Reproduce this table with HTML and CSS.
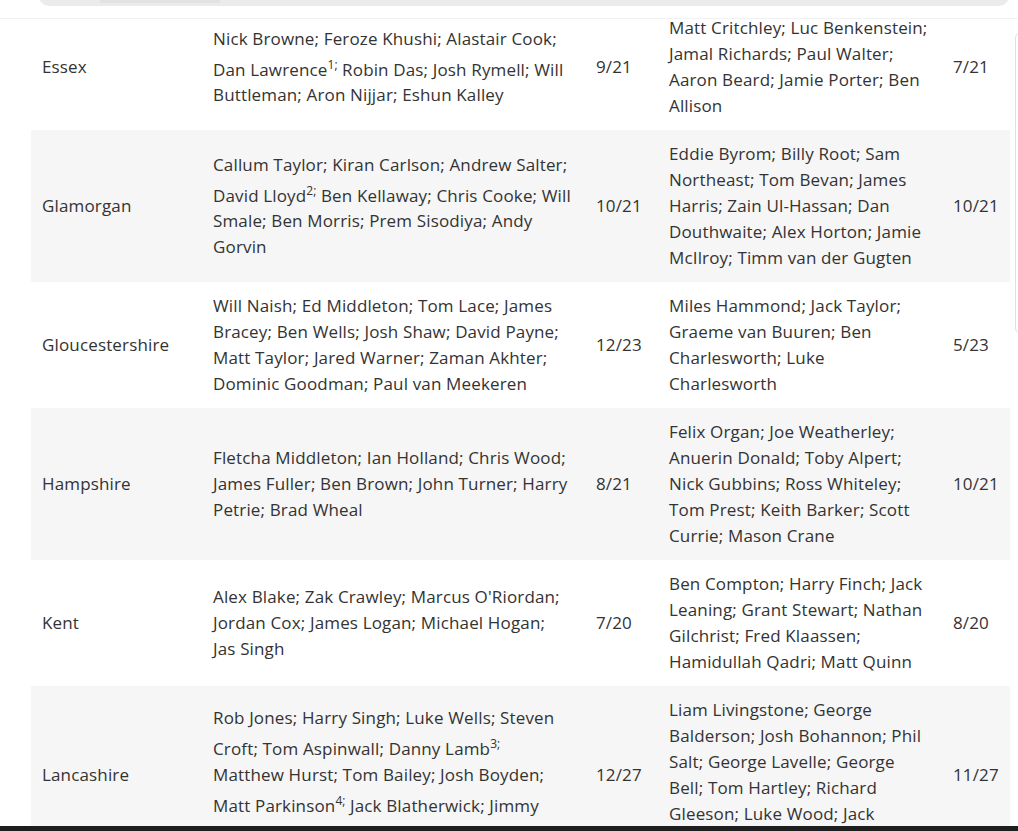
FILE: index.html
```html
<!DOCTYPE html>
<html lang="en">
<head>
<meta charset="utf-8">
<title>County squads</title>
<link rel="stylesheet" href="styles.css">
</head>
<body>
<div class="topbar"><div class="thumb"></div></div>
<div class="topline"></div>
<div class="sidepanel"></div>
<table class="squads">
  <colgroup>
    <col class="c-county"><col class="c-names"><col class="c-num"><col class="c-names2"><col class="c-num2">
  </colgroup>
  <tbody>
    <tr>
      <td>Essex</td>
      <td>Nick Browne; Feroze Khushi; Alastair Cook;<br>Dan Lawrence<sup>1;</sup> Robin Das; Josh Rymell; Will<br>Buttleman; Aron Nijjar; Eshun Kalley</td>
      <td>9/21</td>
      <td>Matt Critchley; Luc Benkenstein;<br>Jamal Richards; Paul Walter;<br>Aaron Beard; Jamie Porter; Ben<br>Allison</td>
      <td>7/21</td>
    </tr>
    <tr>
      <td>Glamorgan</td>
      <td>Callum Taylor; Kiran Carlson; Andrew Salter;<br>David Lloyd<sup>2;</sup> Ben Kellaway; Chris Cooke; Will<br>Smale; Ben Morris; Prem Sisodiya; Andy<br>Gorvin</td>
      <td>10/21</td>
      <td>Eddie Byrom; Billy Root; Sam<br>Northeast; Tom Bevan; James<br>Harris; Zain Ul-Hassan; Dan<br>Douthwaite; Alex Horton; Jamie<br>McIlroy; Timm van der Gugten</td>
      <td>10/21</td>
    </tr>
    <tr>
      <td>Gloucestershire</td>
      <td>Will Naish; Ed Middleton; Tom Lace; James<br>Bracey; Ben Wells; Josh Shaw; David Payne;<br>Matt Taylor; Jared Warner; Zaman Akhter;<br>Dominic Goodman; Paul van Meekeren</td>
      <td>12/23</td>
      <td>Miles Hammond; Jack Taylor;<br>Graeme van Buuren; Ben<br>Charlesworth; Luke<br>Charlesworth</td>
      <td>5/23</td>
    </tr>
    <tr>
      <td>Hampshire</td>
      <td>Fletcha Middleton; Ian Holland; Chris Wood;<br>James Fuller; Ben Brown; John Turner; Harry<br>Petrie; Brad Wheal</td>
      <td>8/21</td>
      <td>Felix Organ; Joe Weatherley;<br>Anuerin Donald; Toby Alpert;<br>Nick Gubbins; Ross Whiteley;<br>Tom Prest; Keith Barker; Scott<br>Currie; Mason Crane</td>
      <td>10/21</td>
    </tr>
    <tr>
      <td>Kent</td>
      <td>Alex Blake; Zak Crawley; Marcus O'Riordan;<br>Jordan Cox; James Logan; Michael Hogan;<br>Jas Singh</td>
      <td>7/20</td>
      <td>Ben Compton; Harry Finch; Jack<br>Leaning; Grant Stewart; Nathan<br>Gilchrist; Fred Klaassen;<br>Hamidullah Qadri; Matt Quinn</td>
      <td>8/20</td>
    </tr>
    <tr>
      <td>Lancashire</td>
      <td>Rob Jones; Harry Singh; Luke Wells; Steven<br>Croft; Tom Aspinwall; Danny Lamb<sup>3;</sup><br>Matthew Hurst; Tom Bailey; Josh Boyden;<br>Matt Parkinson<sup>4;</sup> Jack Blatherwick; Jimmy<br>Anderson</td>
      <td>12/27</td>
      <td>Liam Livingstone; George<br>Balderson; Josh Bohannon; Phil<br>Salt; George Lavelle; George<br>Bell; Tom Hartley; Richard<br>Gleeson; Luke Wood; Jack<br>Morley</td>
      <td>11/27</td>
    </tr>
  </tbody>
</table>
<div class="bottombar"></div>
</body>
</html>
```
FILE: styles.css
```css
html, body {
  margin: 0;
  padding: 0;
  background: #ffffff;
}
body {
  font-family: "Open Sans", "Noto Sans", sans-serif;
  font-size: 17px;
  letter-spacing: 0.15px;
  color: #333333;
  overflow: hidden;
}
.squads {
  margin: 4px 0 0 31px;
  width: 979px;
  table-layout: fixed;
  border-collapse: collapse;
  line-height: 26px;
}
.c-county { width: 171px; }
.c-names { width: 383px; }
.c-num { width: 73px; }
.c-names2 { width: 284px; }
.c-num2 { width: 68px; }
.squads td {
  padding: 11px 11px;
  vertical-align: middle;
  white-space: nowrap;
}
.squads tr:nth-child(even) td {
  background: #f6f6f6;
}
.squads sup {
  font-size: 12px;
  line-height: 26px;
  letter-spacing: 0;
}
.topbar {
  position: absolute;
  top: -10px;
  left: 38px;
  width: 972px;
  height: 16px;
  background: #ebebeb;
  border-radius: 0 0 12px 12px;
}
.thumb {
  position: absolute;
  left: 62px;
  top: 10px;
  width: 120px;
  height: 3px;
  background: #e2e2e2;
  border-radius: 2px;
}
.topline {
  position: absolute;
  top: 18px;
  left: 0;
  width: 100%;
  height: 1px;
  background: rgba(0, 0, 0, 0.05);
}
.sidepanel {
  position: absolute;
  top: 32px;
  left: 1015px;
  width: 20px;
  height: 300px;
  border: 1px solid #e0e0e0;
  border-radius: 6px;
  background: #ffffff;
}
.bottombar {
  position: fixed;
  left: 0;
  bottom: 0;
  width: 100%;
  height: 5px;
  background: #1e1e1e;
}
```
